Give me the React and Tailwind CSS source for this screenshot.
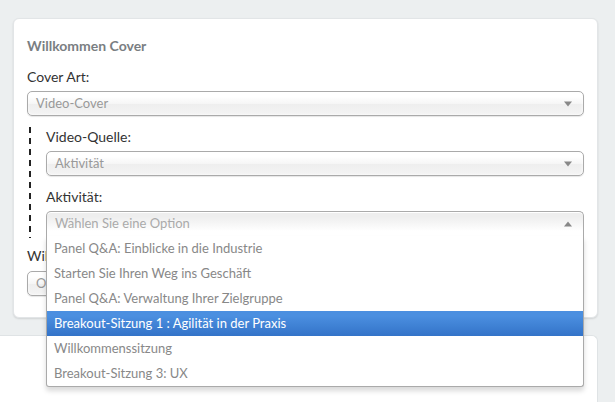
import React from "react";

function Arrow({ up }) {
  return (
    <svg width="8" height="6" viewBox="0 0 8 6" className="absolute right-[11px] top-[9px]">
      {up ? <path d="M0 5.5 L4 0.5 L8 5.5 Z" fill="#888" /> : <path d="M0 0.5 L8 0.5 L4 5.5 Z" fill="#888" />}
    </svg>
  );
}

function Select({ text }) {
  return (
    <div className="relative h-[25px] rounded-[5px] border border-[#aaa] bg-[linear-gradient(#fff_20%,#f6f6f6_50%,#eee_52%,#f4f4f4_100%)] pl-[8px] text-[13px] leading-[23px] text-[#999] shadow-[inset_0_0_3px_#fff,0_1px_1px_rgba(0,0,0,0.1)]">
      {text}
      <Arrow />
    </div>
  );
}

const items = [
  "Panel Q&A: Einblicke in die Industrie",
  "Starten Sie Ihren Weg ins Geschäft",
  "Panel Q&A: Verwaltung Ihrer Zielgruppe",
  "Breakout-Sitzung 1 : Agilität in der Praxis",
  "Willkommenssitzung",
  "Breakout-Sitzung 3: UX",
];

function OpenSelect() {
  return (
    <div className="relative z-10">
      <div className="relative h-[25px] rounded-t-[5px] border border-b-0 border-[#aaa] bg-[linear-gradient(#eee_20%,#fff_80%)] pl-[8px] text-[13px] leading-[23px] text-[#aaa] shadow-[inset_0_1px_0_#fff]">
        Wählen Sie eine Option
        <Arrow up />
      </div>
      <div className="absolute left-0 right-0 top-full rounded-b-[3px] border border-t-0 border-[#aaa] bg-white shadow-[0_4px_5px_rgba(0,0,0,0.15)]">
        {items.map((t, i) =>
          i === 3 ? (
            <div key={i} className="h-[25px] bg-[linear-gradient(#4b8fe0_20%,#3373c8_100%)] pl-[7px] text-[13px] leading-[24px] text-white">
              {t}
            </div>
          ) : (
            <div key={i} className="h-[25px] pl-[7px] text-[13px] leading-[24px] text-[#888]">
              {t}
            </div>
          )
        )}
      </div>
    </div>
  );
}

export default function App() {
  return (
    <div className="relative h-[402px] w-[615px] overflow-hidden bg-[#eceff0] pt-[18px] font-['Lato',sans-serif]">
      <div className="ml-[13px] h-[300px] w-[585px] rounded-[6px] border border-[#e2e5e7] bg-white px-[13px] pt-[17px] shadow-[0_1px_2px_rgba(0,0,0,0.12)]">
        <div className="text-[14px] font-bold leading-[20px] text-[#7a7e82]">Willkommen Cover</div>
        <div className="mt-[11px] text-[14px] leading-[20px] text-[#333]">Cover Art:</div>
        <div className="mt-[4px]">
          <Select text="Video-Cover" />
        </div>
        <div className="mt-[11px] flex">
          <div className="ml-[2px] w-[2px] bg-[repeating-linear-gradient(to_bottom,#222_0_6px,transparent_6px_11px)]" />
          <div className="flex-1 pb-[2px] pl-[15px]">
            <div className="text-[14px] leading-[20px] text-[#333]">Video-Quelle:</div>
            <div className="mt-[4px]">
              <Select text="Aktivität" />
            </div>
            <div className="mt-[11px] text-[14px] leading-[20px] text-[#333]">Aktivität:</div>
            <div className="mt-[4px]">
              <OpenSelect />
            </div>
          </div>
        </div>
        <div className="mt-[8px] text-[14px] leading-[20px] text-[#333]">Willkommen Nachricht:</div>
        <div className="mt-[5px]">
          <Select text="Ohne" />
        </div>
      </div>
      <div className="mt-[17px] mr-[17px] h-[80px] rounded-tr-[6px] border-t border-r border-[#dfe3e5] bg-white" />
    </div>
  );
}
